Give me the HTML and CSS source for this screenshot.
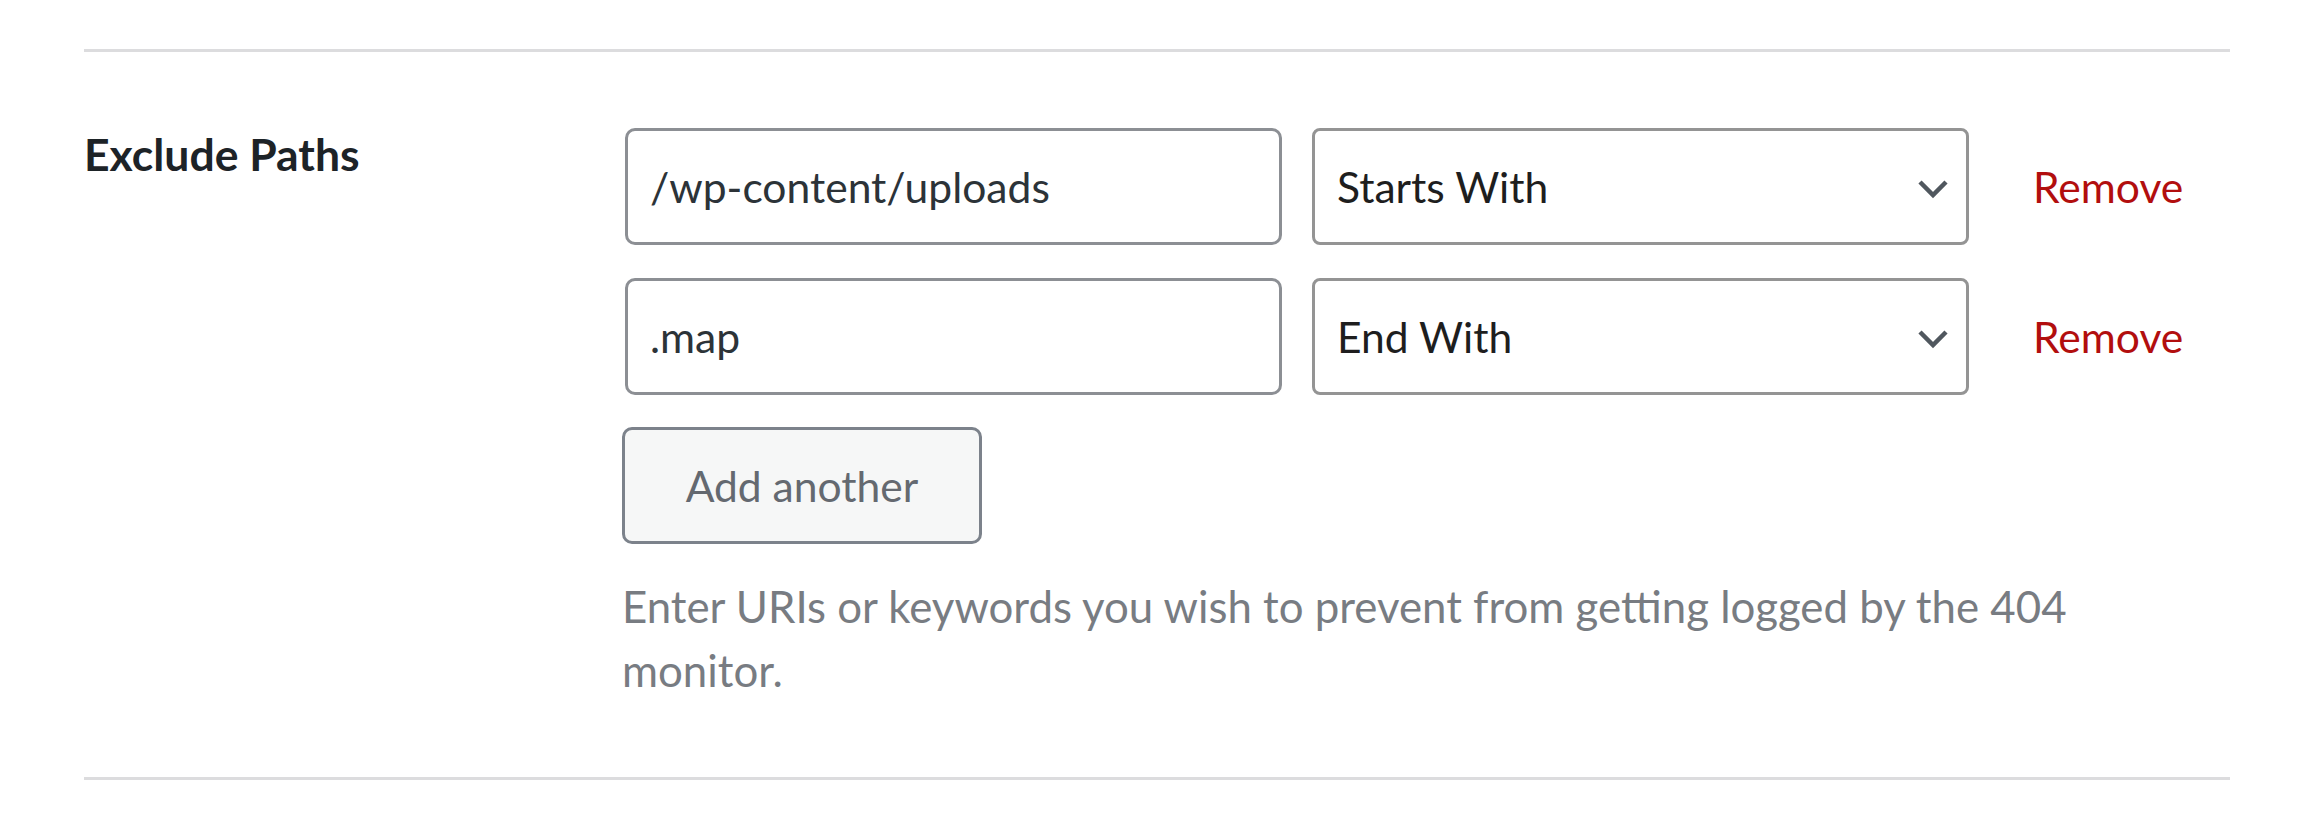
FILE: index.html
```html
<!DOCTYPE html>
<html lang="en">
<head>
    <meta charset="UTF-8">
    <meta name="viewport" content="width=device-width, initial-scale=1.0">
    <title>Exclude Paths</title>
    <link rel="stylesheet" href="styles.css">
</head>
<body>
    <div class="settings">
        <div class="fieldRow">
            <div class="fieldLabel">Exclude Paths</div>
            <div class="fieldControl">
                <div class="pathList">
                    <div class="pathItem">
                        <input class="pathInput" type="text" value="/wp-content/uploads">
                        <div class="selectWrap">
                            <select class="pathMatch">
                                <option>Exact Match</option>
                                <option selected>Starts With</option>
                                <option>End With</option>
                            </select>
                            <svg class="chevron" viewBox="0 0 32 20" width="32" height="20"><path d="M3 3 L16 16 L29 3" fill="none" stroke="#50575e" stroke-width="4.5"/></svg>
                        </div>
                        <a class="removeLink" href="#">Remove</a>
                    </div>
                    <div class="pathItem">
                        <input class="pathInput" type="text" value=".map">
                        <div class="selectWrap">
                            <select class="pathMatch">
                                <option>Exact Match</option>
                                <option>Starts With</option>
                                <option selected>End With</option>
                            </select>
                            <svg class="chevron" viewBox="0 0 32 20" width="32" height="20"><path d="M3 3 L16 16 L29 3" fill="none" stroke="#50575e" stroke-width="4.5"/></svg>
                        </div>
                        <a class="removeLink" href="#">Remove</a>
                    </div>
                </div>
                <button class="btnAdd" type="button">Add another</button>
                <p class="description">Enter URIs or keywords you wish to prevent from getting logged by the 404 monitor.</p>
            </div>
        </div>
    </div>
</body>
</html>
```

FILE: styles.css
```css
*
{
    box-sizing: border-box;
}
body
{
    margin: 0px;
    background-color: #fff;
    font-family: Lato, "Noto Sans", sans-serif;
}
.settings
{
    margin: 0px 86px 0px 84px;
    padding-top: 49px;
}
.fieldRow
{
    display: grid;
    grid-template-columns: 538px 1fr;
    border-top: 3px solid #dcdcde;
    border-bottom: 3px solid #dcdcde;
    padding: 76px 0px 75px;
}
.fieldLabel
{
    font-size: 44.5px;
    font-weight: 700;
    line-height: 52px;
    color: #1d2327;
}
.pathList
{
    display: flex;
    flex-direction: column;
    gap: 33px;
}
.pathItem
{
    display: flex;
    align-items: center;
}
.pathInput
{
    margin: 0px 0px 0px 3px;
    width: 657px;
    height: 117px;
    padding: 0px 22px;
    border: 3px solid #8c8f94;
    border-radius: 10px;
    font-family: inherit;
    font-size: 42.6px;
    color: #2c3338;
    background-color: #fff;
}
.selectWrap
{
    position: relative;
    margin-left: 30px;
    width: 657px;
    height: 117px;
}
.pathMatch
{
    appearance: none;
    -webkit-appearance: none;
    width: 100%;
    height: 100%;
    margin: 0px;
    padding: 0px 80px 0px 22px;
    border: 3px solid #949494;
    border-radius: 8px;
    background-color: #fff;
    font-family: inherit;
    font-size: 42.6px;
    color: #1e1e1e;
}
.chevron
{
    position: absolute;
    right: 20px;
    top: 51px;
    pointer-events: none;
}
.removeLink
{
    margin-left: 64px;
    font-size: 42.6px;
    color: #b20e0e;
    text-decoration: none;
}
.btnAdd
{
    display: block;
    margin-top: 32px;
    width: 360px;
    height: 117px;
    border: 3px solid #7c828b;
    border-radius: 10px;
    background-color: #f6f7f7;
    font-family: inherit;
    font-size: 42.6px;
    color: #646970;
    cursor: pointer;
}
.description
{
    margin: 30px 0px 0px;
    max-width: 1561px;
    font-size: 43.8px;
    line-height: 64px;
    color: #787c82;
}
```
